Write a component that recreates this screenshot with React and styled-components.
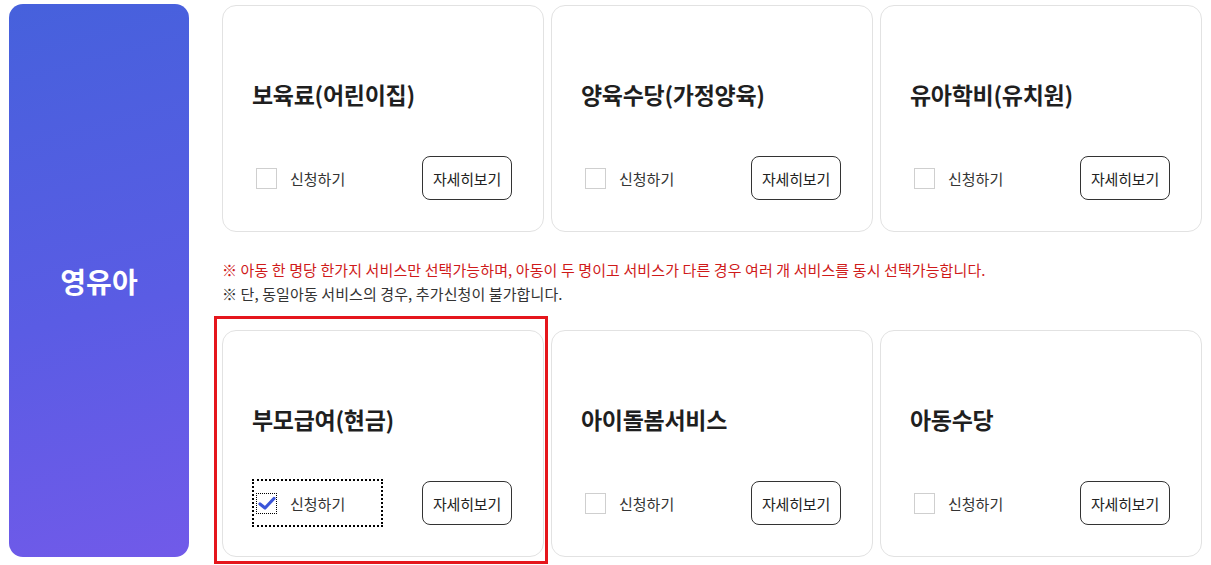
import * as React from "react"
import styled, { createGlobalStyle } from "styled-components"

const GlobalStyle = createGlobalStyle`
  html, body {
    margin: 0;
    padding: 0;
    background: #fff;
  }
  body {
    font-family: "Noto Sans CJK KR", "Noto Sans", sans-serif;
    color: #222;
  }
`

const Page = styled.div`
  display: flex;
  gap: 33px;
  padding: 4px 9px 8px 9px;
  width: 1211px;
  box-sizing: border-box;
`

const Category = styled.div`
  flex: 0 0 180px;
  height: 553px;
  border-radius: 14px;
  background: linear-gradient(165deg, #4661dc 0%, #5a5ce4 55%, #715ae9 100%);
  display: flex;
  align-items: center;
  justify-content: center;
  color: #fff;
  font-size: 28px;
  font-weight: 700;
`

const Content = styled.div`
  flex: 1;
  display: flex;
  flex-direction: column;
  padding-top: 1px;
`

const CardRow = styled.div`
  display: grid;
  grid-template-columns: repeat(3, 1fr);
  gap: 7px;
`

const Card = styled.div`
  position: relative;
  height: 227px;
  box-sizing: border-box;
  border: 1px solid #e2e2e2;
  border-radius: 14px;
  padding: 71px 31px 29px 29px;
  display: flex;
  flex-direction: column;
`

const Highlight = styled.div`
  position: absolute;
  left: -9px;
  top: -15px;
  right: -5px;
  bottom: -8px;
  border: 3px solid #e5161c;
  pointer-events: none;
`

const Title = styled.h3`
  margin: 0;
  font-size: 23px;
  font-weight: 700;
  line-height: 34px;
  color: #1f1f1f;
  letter-spacing: -0.3px;
`

const Footer = styled.div`
  margin-top: auto;
  display: flex;
  align-items: center;
  justify-content: space-between;
`

const Apply = styled.label`
  width: 131px;
  height: 48px;
  box-sizing: border-box;
  padding-left: 4px;
  display: flex;
  align-items: center;
  gap: 13px;
  font-size: 15px;
  color: #333;
  cursor: pointer;
  outline: ${p => (p.$focused ? "2px dotted #000" : "none")};
  outline-offset: -2px;
`

const Box = styled.span`
  width: 21px;
  height: 21px;
  box-sizing: border-box;
  border: 1px ${p => (p.$checked ? "dotted #000" : "solid #cfcfcf")};
  background: #fff;
  display: flex;
  align-items: center;
  justify-content: center;
`

const DetailButton = styled.button`
  width: 90px;
  height: 44px;
  border: 1px solid #333;
  border-radius: 8px;
  background: #fff;
  font-family: inherit;
  font-size: 15px;
  letter-spacing: -0.2px;
  color: #222;
  padding: 0;
  cursor: pointer;
`

const Notes = styled.div`
  padding: 26px 0 24px 0;
  font-size: 15px;
  line-height: 24px;
  letter-spacing: 0.1px;
  color: #333;
`

const NoteLine = styled.p`
  margin: 0;
  white-space: nowrap;
  color: ${p => (p.$warn ? "#cf1a1a" : "#333")};
`

const Check = () => (
  <svg width="18" height="15" viewBox="0 0 18 15">
    <path d="M2 8 L7 12 L16 2.5" fill="none" stroke="#3b55d9" strokeWidth="3.2" strokeLinecap="round" strokeLinejoin="round" />
  </svg>
)

const ServiceCard = ({ title, checked, highlighted }) => (
  <Card>
    {highlighted && <Highlight />}
    <Title>{title}</Title>
    <Footer>
      <Apply $focused={checked}>
        <Box $checked={checked}>{checked && <Check />}</Box>
        신청하기
      </Apply>
      <DetailButton>자세히보기</DetailButton>
    </Footer>
  </Card>
)

const topRow = ["보육료(어린이집)", "양육수당(가정양육)", "유아학비(유치원)"]
const bottomRow = ["부모급여(현금)", "아이돌봄서비스", "아동수당"]

export default function App() {
  return (
    <>
      <GlobalStyle />
      <Page>
        <Category>영유아</Category>
        <Content>
          <CardRow>
            {topRow.map(t => (
              <ServiceCard key={t} title={t} />
            ))}
          </CardRow>
          <Notes>
            <NoteLine $warn>
              ※ 아동 한 명당 한가지 서비스만 선택가능하며, 아동이 두 명이고 서비스가 다른 경우 여러 개 서비스를 동시 선택가능합니다.
            </NoteLine>
            <NoteLine>※ 단, 동일아동 서비스의 경우, 추가신청이 불가합니다.</NoteLine>
          </Notes>
          <CardRow>
            {bottomRow.map((t, i) => (
              <ServiceCard key={t} title={t} checked={i === 0} highlighted={i === 0} />
            ))}
          </CardRow>
        </Content>
      </Page>
    </>
  )
}
